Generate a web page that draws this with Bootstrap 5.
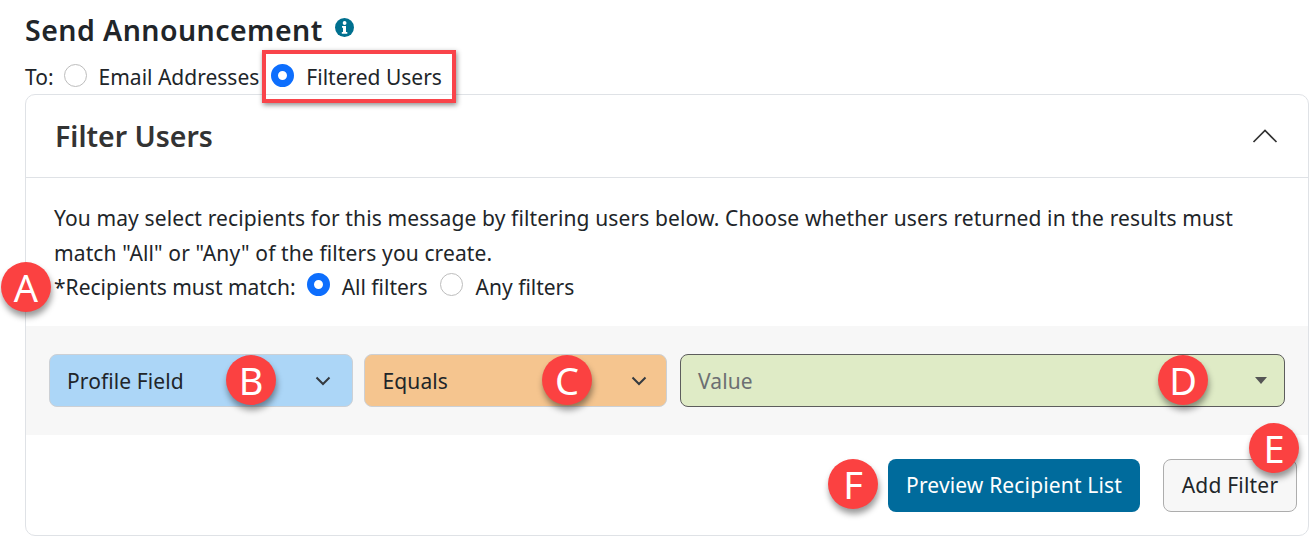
<!DOCTYPE html>
<html lang="en">
<head>
<meta charset="utf-8">
<title>Send Announcement</title>
<link rel="stylesheet" href="https://cdn.jsdelivr.net/npm/bootstrap@5.3.0/dist/css/bootstrap.min.css">
<style>
html,body{height:542px;overflow:hidden}
body{font-family:"Noto Sans","Open Sans",sans-serif;font-size:21px;line-height:34.5px;color:#212529;background:#fff;position:relative}
.shot{padding:10px 6px 0 25px}
.page-title{font-size:28.5px;font-weight:600;line-height:40px;margin:0;letter-spacing:.45px}
.info-icon{width:19px;height:19px;margin-left:12px;vertical-align:4px}
.to-row{height:44px;padding-top:10px;align-items:center}
.radio-dot{width:23px;height:23px;border-radius:50%;border:1px solid #bdbdbd;background:#fff;flex:none;display:inline-block}
.radio-dot.on{border:7px solid #0d6efd}
.to-row .radio-dot{margin:0 12px 4px 10px}
.to-row .radio-dot.on{margin-left:12px}
.filter-card{height:442px;border:1px solid #dfe2e6;border-radius:10px;overflow:hidden}
.filter-head{height:83px;padding:0 30px 0 29px;border-bottom:1px solid #dfe2e6}
.filter-title{font-size:28.5px;font-weight:600;margin:0;color:#333}
.filter-body{padding:23px 60px 0 28px;height:148px}
.filter-lead{letter-spacing:.12px}
.match-row{align-items:center}
.match-row .radio-dot{margin:0 12px 6px 11px}
.match-row .radio-dot.any{margin:0 13px 6px 12px}
.band{height:109px;background:#f7f7f7;padding:28px 23px;gap:11px}
.pick{height:53px;border-radius:8px;padding:0 21px 0 17px;border:1px solid #ccd0d5;letter-spacing:.1px}
.pick span{padding-top:2px}
.pick-blue{width:304px;background:#acd6f7}
.pick-orange{width:304px;background:#f5c58f;padding:0 19px 0 18px}
.pick-green{width:606px;margin-left:2px;background:#dfebc6;border-color:#5d5d5d;color:#6c6f72;padding-right:17px}
.foot{padding:24px 11px 0 0;gap:23px}
.btn-main,.btn-main:hover{background:#006b9c;color:#fff;width:252px;height:53px;font-size:21px;letter-spacing:.15px;border:0;border-radius:8px;padding:0}
.btn-soft,.btn-soft:hover{background:#f7f7f7;color:#212529;width:134px;height:53px;font-size:21px;letter-spacing:.2px;border:1px solid #adadad;border-radius:8px;padding:0}
.callout-box{position:absolute;left:262px;top:50px;width:194px;height:53px;border:4px solid #f9444a;box-shadow:1px 2px 5px rgba(0,0,0,.45)}
.pin{position:absolute;width:50px;height:50px;border-radius:50%;background:#fb4141;color:#fff;font-size:38px;line-height:50px;text-align:center;box-shadow:1px 5px 6px rgba(0,0,0,.4)}
.pin-a{left:1px;top:262px}.pin-b{left:226px;top:355px}.pin-c{left:542px;top:355px}
.pin-d{left:1158px;top:355px}.pin-e{left:1249px;top:423px}.pin-f{left:828px;top:459px}
</style>
</head>
<body>
<div class="shot">
  <h1 class="page-title">Send Announcement<svg class="info-icon" viewBox="0 0 19 19" aria-hidden="true"><circle cx="9.5" cy="9.5" r="9.5" fill="#00708f"/><circle cx="9.6" cy="5" r="1.9" fill="#fff"/><path d="M7 8h4v6h1.3v1.8H6.8V14H8v-4.200H7z" fill="#fff"/></svg></h1>
  <div class="d-flex to-row"><span>To:</span><span class="radio-dot"></span><span>Email Addresses</span><span class="radio-dot on"></span><span>Filtered Users</span></div>
  <div class="filter-card">
    <div class="filter-head d-flex align-items-center justify-content-between">
      <h2 class="filter-title">Filter Users</h2>
      <svg width="26" height="16" viewBox="0 0 26 16" aria-hidden="true"><path d="M1.500 14 13 2.500 24.500 14" fill="none" stroke="#333" stroke-width="1.700"/></svg>
    </div>
    <div class="filter-body">
      <div class="filter-lead">You may select recipients for this message by filtering users below. Choose whether users returned in the results must match "All" or "Any" of the filters you create.</div>
      <div class="d-flex match-row"><span>*Recipients must match:</span><span class="radio-dot on"></span><span>All filters</span><span class="radio-dot any"></span><span>Any filters</span></div>
    </div>
    <div class="band d-flex">
      <div class="pick pick-blue d-flex align-items-center justify-content-between"><span>Profile Field</span><svg width="16" height="10" viewBox="0 0 16 10" aria-hidden="true"><path d="M1.500 1.500 8 8l6.500-6.500" fill="none" stroke="#343a40" stroke-width="2"/></svg></div>
      <div class="pick pick-orange d-flex align-items-center justify-content-between"><span>Equals</span><svg width="16" height="10" viewBox="0 0 16 10" aria-hidden="true"><path d="M1.500 1.500 8 8l6.500-6.500" fill="none" stroke="#343a40" stroke-width="2"/></svg></div>
      <div class="pick pick-green d-flex align-items-center justify-content-between"><span>Value</span><svg width="12" height="7" viewBox="0 0 12 7" aria-hidden="true"><path d="M0 0h12L6 7z" fill="#555"/></svg></div>
    </div>
    <div class="foot d-flex justify-content-end">
      <button type="button" class="btn btn-main">Preview Recipient List</button>
      <button type="button" class="btn btn-soft">Add Filter</button>
    </div>
  </div>
</div>
<div class="callout-box"></div>
<div class="pin pin-a">A</div><div class="pin pin-b">B</div><div class="pin pin-c">C</div>
<div class="pin pin-d">D</div><div class="pin pin-e">E</div><div class="pin pin-f">F</div>
</body>
</html>
